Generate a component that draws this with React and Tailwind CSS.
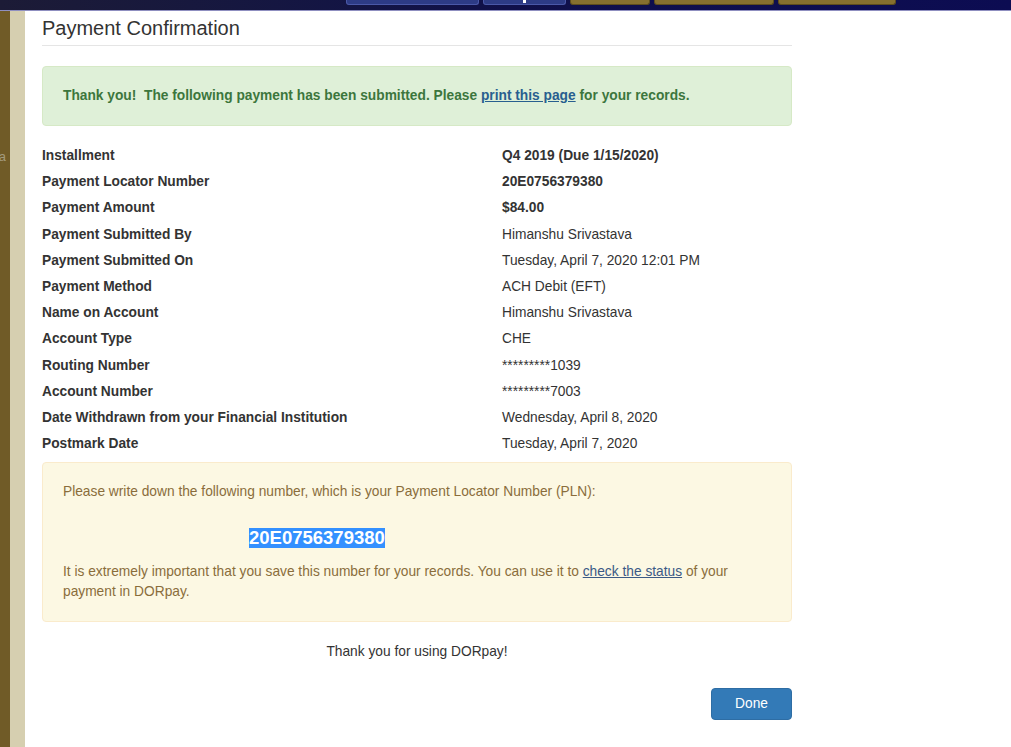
import React from 'react';

const rows = [
    { label: 'Installment', value: 'Q4 2019 (Due 1/15/2020)', bold: true },
    { label: 'Payment Locator Number', value: '20E0756379380', bold: true },
    { label: 'Payment Amount', value: '$84.00', bold: true },
    { label: 'Payment Submitted By', value: 'Himanshu Srivastava' },
    { label: 'Payment Submitted On', value: 'Tuesday, April 7, 2020 12:01 PM' },
    { label: 'Payment Method', value: 'ACH Debit (EFT)' },
    { label: 'Name on Account', value: 'Himanshu Srivastava' },
    { label: 'Account Type', value: 'CHE' },
    { label: 'Routing Number', value: '*********1039' },
    { label: 'Account Number', value: '*********7003' },
    { label: 'Date Withdrawn from your Financial Institution', value: 'Wednesday, April 8, 2020' },
    { label: 'Postmark Date', value: 'Tuesday, April 7, 2020' },
];

function TopBar() {
    return (
        <div className="h-[11px] w-full bg-gradient-to-r from-[#1c1b36] via-[#10104a] to-[#0c0c52] border-b border-[#8f8fc0] flex items-start pl-[346px] gap-[4px]">
            <div className="w-[133px] h-[5px] bg-[#2d3b86] border border-t-0 border-[#4a58a8] rounded-b-[3px]" />
            <div className="w-[83px] h-[5px] bg-[#2d3b86] border border-t-0 border-[#4a58a8] rounded-b-[3px] flex justify-center">
                <div className="w-[3px] h-[3px] bg-white" />
            </div>
            <div className="w-[80px] h-[5px] bg-[#86702f] border border-t-0 border-[#5e4d1c] rounded-b-[3px]" />
            <div className="w-[120px] h-[5px] bg-[#86702f] border border-t-0 border-[#5e4d1c] rounded-b-[3px]" />
            <div className="w-[118px] h-[5px] bg-[#86702f] border border-t-0 border-[#5e4d1c] rounded-b-[3px]" />
        </div>
    );
}

export default function App() {
    return (
        <div className="h-[747px] w-[1011px] overflow-hidden bg-white font-['Liberation_Sans',Arial,sans-serif] text-[13.75px] text-[#333]">
            <TopBar />
            <div className="flex h-[736px]">
                {/* left side strips */}
                <div className="w-[10px] bg-[#705b27] flex justify-end overflow-hidden">
                    <div className="mt-[136px] mr-[4px] text-[13px] leading-5 text-[#a39a7c] whitespace-nowrap">a</div>
                </div>
                <div className="w-[15px] bg-[#d6cfb0]" />

                {/* main content */}
                <div className="pl-[17px] w-[767px]">
                    <h1 className="text-[20px] leading-[22px] text-[#333] mt-[6px] pb-[6px] border-b border-[#e5e5e5]">
                        Payment Confirmation
                    </h1>

                    <div className="mt-[20px] h-[60px] flex items-center px-[20px] bg-[#dff0d8] border border-[#d6e9c6] rounded-[4px] text-[#3c763d] font-bold">
                        Thank you!&nbsp; The following payment has been submitted. Please&nbsp;
                        <a href="#" className="text-[#285f8f] underline">print this page</a>
                        &nbsp;for your records.
                    </div>

                    <div className="mt-[17px]">
                        {rows.map((row) => (
                            <div key={row.label} className="grid grid-cols-[460px_1fr] leading-[26.2px]">
                                <div className="font-bold">{row.label}</div>
                                <div className={row.bold ? 'font-bold' : ''}>{row.value}</div>
                            </div>
                        ))}
                    </div>

                    <div className="mt-[5px] h-[160px] px-[20px] pt-[19px] bg-[#fcf8e3] border border-[#faebcc] rounded-[4px] text-[#8a6d3b] leading-5">
                        <p>Please write down the following number, which is your Payment Locator Number (PLN):</p>
                        <div className="mt-[26px] pl-[186px] h-[20px]">
                            <span className="bg-[#3390ff] text-white font-bold text-[18.5px] leading-5 inline-block">20E0756379380</span>
                        </div>
                        <p className="mt-[14px]">
                            It is extremely important that you save this number for your records. You can use it to{' '}
                            <a href="#" className="text-[#3b5a86] underline">check the status</a> of your payment in DORpay.
                        </p>
                    </div>

                    <p className="mt-[20px] text-center leading-5">Thank you for using DORpay!</p>

                    <div className="mt-[26px] flex justify-end">
                        <button className="w-[81px] h-[32px] bg-[#337ab7] border border-[#2e6da4] rounded-[4px] text-white">
                            Done
                        </button>
                    </div>
                </div>
            </div>
        </div>
    );
}
